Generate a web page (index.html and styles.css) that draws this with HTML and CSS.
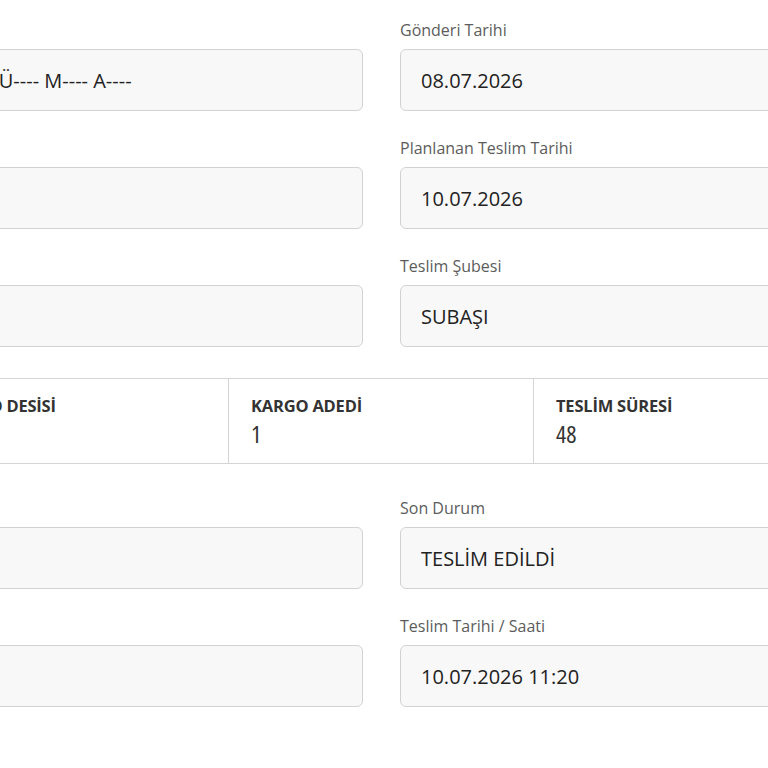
FILE: index.html
```html
<!DOCTYPE html>
<html lang="tr">
<head>
  <meta charset="UTF-8">
  <meta name="viewport" content="width=device-width, initial-scale=1.0">
  <title>Gönderi Detayı</title>
  <link rel="stylesheet" href="styles.css">
</head>
<body>

  <div class="page">
    <div class="form-grid">
      <div class="field no-label">
        <input type="text" id="alici" value="AY---- Ü---- M---- A----" readonly>
      </div>
      <div class="field">
        <label for="gonderiTarihi">Gönderi Tarihi</label>
        <input type="text" id="gonderiTarihi" value="08.07.2026" readonly>
      </div>

      <div class="field no-label">
        <input type="text" id="telefon" value="" readonly>
      </div>
      <div class="field">
        <label for="planlanan">Planlanan Teslim Tarihi</label>
        <input type="text" id="planlanan" value="10.07.2026" readonly>
      </div>

      <div class="field no-label">
        <input type="text" id="cikis" value="" readonly>
      </div>
      <div class="field">
        <label for="sube">Teslim Şubesi</label>
        <input type="text" id="sube" value="SUBAŞI" readonly>
      </div>
    </div>

    <div class="stats">
      <div class="stat">
        <div class="stat-title">KARGO DESİSİ</div>
        <div class="stat-value">&nbsp;</div>
      </div>
      <div class="stat">
        <div class="stat-title">KARGO ADEDİ</div>
        <div class="stat-value">1</div>
      </div>
      <div class="stat">
        <div class="stat-title">TESLİM SÜRESİ</div>
        <div class="stat-value">48</div>
      </div>
    </div>

    <div class="form-grid">
      <div class="field no-label">
        <input type="text" id="odeme" value="" readonly>
      </div>
      <div class="field">
        <label for="sonDurum">Son Durum</label>
        <input type="text" id="sonDurum" value="TESLİM EDİLDİ" readonly>
      </div>

      <div class="field no-label">
        <input type="text" id="alan" value="" readonly>
      </div>
      <div class="field">
        <label for="teslimSaati">Teslim Tarihi / Saati</label>
        <input type="text" id="teslimSaati" value="10.07.2026 11:20" readonly>
      </div>
    </div>
  </div>

</body>
</html>
```

FILE: styles.css
```css
body {
  font-family: 'Open Sans', 'Noto Sans', sans-serif;
  background: #fff;
  margin: 0;
  padding: 0;
  overflow: hidden;
}

.page {
  width: 915px;
  margin-left: -77px;
  padding-top: 20px;
}

.form-grid {
  display: grid;
  grid-template-columns: 440px 1fr;
  column-gap: 37px;
  row-gap: 27px;
}

.field {
  display: flex;
  flex-direction: column;
}

.field.no-label {
  padding-top: 29px;
}

label {
  display: block;
  font-size: 16px;
  line-height: 20px;
  margin-bottom: 9px;
  color: #5c5c5c;
}

input {
  height: 62px;
  padding: 0 20px;
  box-sizing: border-box;
  border: 1px solid #d2d2d2;
  border-radius: 6px;
  background-color: #f8f8f8;
  font-family: inherit;
  font-size: 20px;
  color: #222;
  outline: none;
}

.stats {
  display: grid;
  grid-template-columns: repeat(3, 1fr);
  border-top: 1px solid #d4d4d4;
  border-bottom: 1px solid #d4d4d4;
  margin: 31px 0 34px;
}

.stat {
  padding: 16px 22px 15px;
  border-left: 1px solid #d4d4d4;
}

.stat:first-child {
  border-left: none;
}

.stat-title {
  font-size: 16.5px;
  line-height: 22px;
  font-weight: bold;
  color: #333;
  letter-spacing: -0.2px;
}

.stat-value {
  margin-top: 3px;
  font-size: 24px;
  font-stretch: 75%;
  line-height: 28px;
  color: #333;
}
```
